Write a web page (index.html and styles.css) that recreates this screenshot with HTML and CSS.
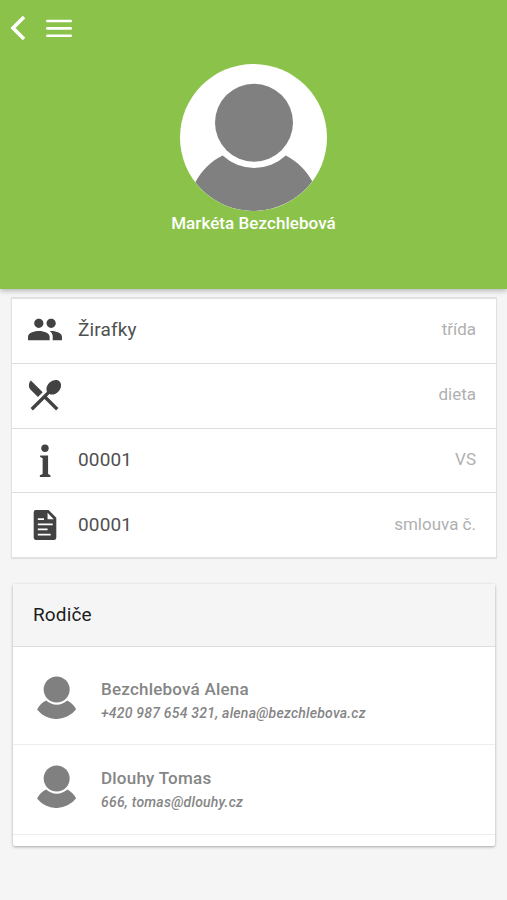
FILE: index.html
```html
<!DOCTYPE html>
<html lang="cs">
<head>
    <meta charset="UTF-8">
    <meta name="viewport" content="width=device-width, initial-scale=1.0">
    <title>Markéta Bezchlebová</title>
    <link rel="stylesheet" href="styles.css">
</head>
<body>
    <svg class="symbols" width="0" height="0">
        <symbol id="person" viewBox="0 0 147 147">
            <circle cx="74" cy="58.7" r="39"/>
            <path d="M42.7 91.5 A46.3 46.3 0 0 0 105.8 91.5 C118 98 126 106 132.3 117.5 A73.5 73.5 0 0 1 15.2 118.5 C22 106 31 97 42.7 91.5Z"/>
        </symbol>
    </svg>

    <header class="header">
        <nav class="toolbar">
            <svg class="back" viewBox="0 0 16 26"><path d="M14 2 L3 13 L14 24"/></svg>
            <svg class="menu" viewBox="0 0 26 20"><path d="M1.3 2 H24.7 M1.3 9.4 H24.7 M1.3 16.7 H24.7"/></svg>
        </nav>
        <svg class="photo"><use href="#person"/></svg>
        <h1 class="name">Markéta Bezchlebová</h1>
    </header>

    <ul class="info">
        <li class="info-row">
            <svg class="icon" viewBox="0 0 24 24"><path d="M16 11c1.66 0 2.99-1.34 2.99-3S17.66 5 16 5c-1.66 0-3 1.34-3 3s1.34 3 3 3zm-8 0c1.66 0 2.99-1.34 2.99-3S9.66 5 8 5C6.34 5 5 6.34 5 8s1.34 3 3 3zm0 2c-2.33 0-7 1.17-7 3.5V19h14v-2.5c0-2.33-4.67-3.5-7-3.5zm8 0c-.29 0-.62.02-.97.05 1.16.84 1.97 1.97 1.97 3.45V19h6v-2.5c0-2.33-4.67-3.5-7-3.5z"/></svg>
            <span class="value">Žirafky</span>
            <span class="label">třída</span>
        </li>
        <li class="info-row">
            <svg class="icon" viewBox="1.3 0.8 22 22"><path d="M8.1 13.34l2.83-2.83L3.91 3.5c-1.56 1.56-1.56 4.09 0 5.66l4.19 4.18zm6.78-1.81c1.53.71 3.68.21 5.27-1.38 1.91-1.91 2.28-4.65.81-6.12-1.46-1.46-4.2-1.1-6.12.81-1.59 1.59-2.09 3.74-1.38 5.27L3.7 19.87l1.41 1.41L12 14.41l6.88 6.88 1.41-1.41L13.41 13l1.47-1.47z"/></svg>
            <span class="value"></span>
            <span class="label">dieta</span>
        </li>
        <li class="info-row">
            <svg class="icon" viewBox="0 0 36 36"><circle cx="18" cy="7" r="3.6"/><path d="M13.3 14.2 H21 V32 L23.3 33.4 V35 H13 V33.4 L15.7 32 V16.7 L13.3 15.5Z"/></svg>
            <span class="value">00001</span>
            <span class="label">VS</span>
        </li>
        <li class="info-row">
            <svg class="icon" viewBox="0 0 36 36"><path fill-rule="evenodd" d="M9 4 H21.5 L29 11.5 V31 Q29 33 27 33 H9 Q7 33 7 31 V6 Q7 4 9 4Z M20.5 6.5 V12.8 H26.5Z M11 12 H17 V13.7 H11Z M11 17 H25.5 V18.7 H11Z M11 22 H20.5 V23.7 H11Z M11 27 H23.5 V28.7 H11Z"/></svg>
            <span class="value">00001</span>
            <span class="label">smlouva č.</span>
        </li>
    </ul>

    <section class="parents">
        <h2 class="parents-title">Rodiče</h2>
        <div class="parent">
            <svg class="avatar"><use href="#person"/></svg>
            <div>
                <div class="parent-name">Bezchlebová Alena</div>
                <div class="contact">+420 987 654 321, alena@bezchlebova.cz</div>
            </div>
        </div>
        <div class="parent">
            <svg class="avatar"><use href="#person"/></svg>
            <div>
                <div class="parent-name">Dlouhy Tomas</div>
                <div class="contact">666, tomas@dlouhy.cz</div>
            </div>
        </div>
    </section>
</body>
</html>
```
FILE: styles.css
```css
* {
    box-sizing: border-box;
}
body {
    margin: 0;
    min-height: 100vh;
    font-family: Roboto, "Liberation Sans", sans-serif;
    background-color: #f5f5f5;
}
.symbols {
    display: block;
}
.header {
    height: 289px;
    background: #8bc34a;
    box-shadow: 0 2px 5px rgba(0,0,0,0.25);
    display: flex;
    flex-direction: column;
    align-items: center;
}
.toolbar {
    align-self: stretch;
    height: 64px;
    padding: 15px 10px 0;
    display: flex;
    align-items: flex-start;
    gap: 20px;
}
.toolbar svg {
    fill: none;
    stroke: white;
}
.back {
    width: 16px;
    height: 26px;
    stroke-width: 3.6;
}
.menu {
    width: 26px;
    height: 20px;
    margin-top: 3.5px;
    stroke-width: 2.6;
    stroke-linecap: round;
}
.photo {
    width: 147px;
    height: 147px;
    border-radius: 50%;
    background: white;
    fill: #808080;
}
.name {
    margin: 2px 0 0;
    font-size: 17px;
    line-height: 21px;
    font-weight: 500;
    letter-spacing: 0.06px;
    color: white;
}
.info {
    list-style: none;
    margin: 8px 10px 0 11px;
    padding: 0;
    background: white;
    border: 1px solid #dfe1e3;
    border-top-width: 2px;
    box-shadow: 0 1px 1px rgba(0,0,0,0.08);
}
.info-row {
    height: 64.8px;
    padding: 0 20px 2px 14px;
    display: flex;
    align-items: center;
}
.info-row:first-child {
    height: 63.8px;
}
.info-row + .info-row {
    border-top: 1px solid #dedede;
}
.icon {
    width: 38px;
    height: 37px;
    fill: #424242;
}
.value {
    flex: 1;
    margin-left: 14px;
    font-size: 19px;
    letter-spacing: 0.15px;
    color: #505050;
}
.label {
    padding-bottom: 1px;
    font-size: 17px;
    color: #b0b0b0;
}
.parents {
    margin: 26px 12px 0 13px;
    height: 262px;
    background: white;
    border-radius: 2px;
    box-shadow: 0 1px 3px rgba(0,0,0,0.32);
}
.parents-title {
    margin: 0;
    height: 63px;
    padding-left: 20px;
    line-height: 62px;
    font-size: 19px;
    font-weight: 400;
    letter-spacing: 0.15px;
    color: #1c1c1c;
    background: #f5f5f5;
    border-bottom: 1px solid #dedede;
}
.parent {
    height: 90px;
    padding: 14px 20px 0 19px;
    display: flex;
    border-bottom: 1px solid #ededed;
}
.parents-title + .parent {
    height: 98px;
    padding-top: 23px;
}
.avatar {
    width: 49px;
    height: 49px;
    margin-right: 20px;
    fill: #808080;
}
.parent-name {
    margin-top: 7px;
    font-size: 17px;
    line-height: 24px;
    font-weight: 500;
    letter-spacing: 0.22px;
    color: #858585;
}
.contact {
    font-size: 14px;
    line-height: 24px;
    font-weight: 500;
    font-style: italic;
    letter-spacing: 0.23px;
    color: #858585;
}
```
